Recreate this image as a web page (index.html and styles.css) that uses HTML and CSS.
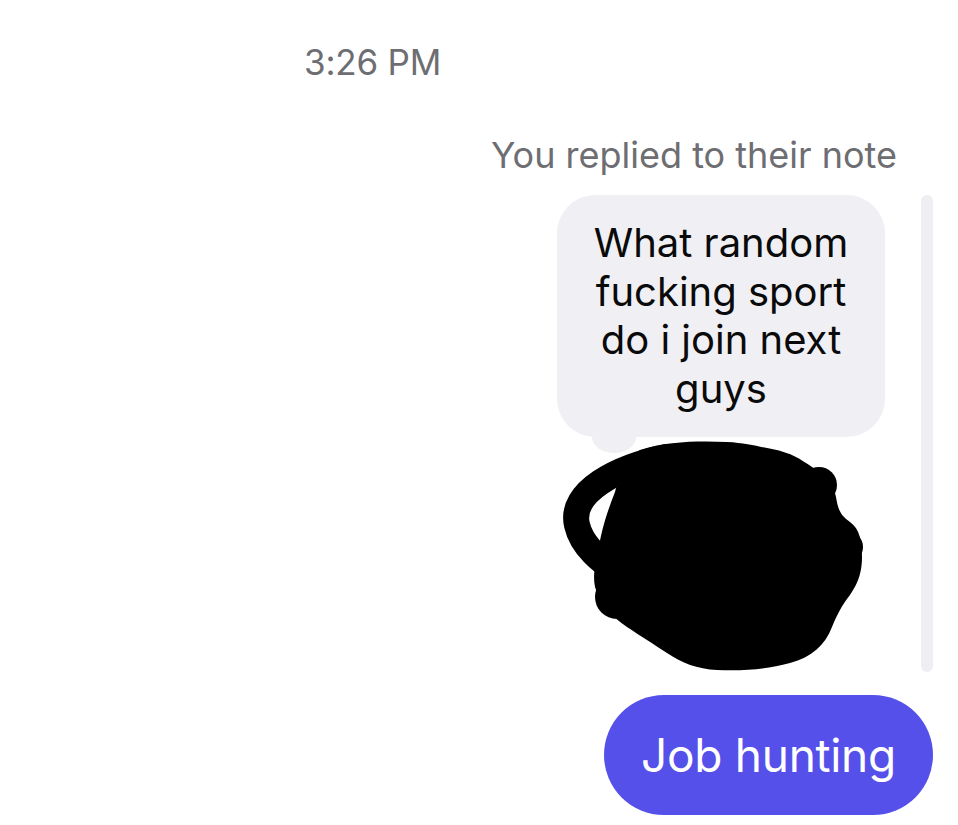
FILE: index.html
```html
<!DOCTYPE html>
<html>
<head>
<meta charset="utf-8">
<link rel="stylesheet" href="styles.css">
</head>
<body>
<div class="thread">
  <div class="time">3:26 PM</div>
  <div class="reply-label">You replied to their note</div>
  <div class="note-row">
    <div class="note-col">
      <div class="note-bubble">
        <p class="note-text">What random fucking sport do i join next guys</p>
        <span class="note-tail"></span>
      </div>
      <svg class="redacted" width="328" height="236" viewBox="0 0 328 236">
        <path fill="#000" d="M83 13 C110 4 143 4 170 5 C190 6 203 10 215 12 C235 16 243 22 255 30 C268 38 276 45 279 60 C281 72 283 78 293 85 C303 92 305 105 305 120 C305 140 298 150 293 158 C285 168 280 178 275 190 C268 208 255 220 233 226 C210 232 190 234 160 233 C140 232 125 226 110 216 C95 206 85 200 70 190 C55 180 42 165 38 150 C35 135 40 125 42 110 C44 95 50 75 58 55 C63 38 70 20 83 13 Z"/>
        <path fill="none" stroke="#000" stroke-width="26" stroke-linecap="round" d="M110 20 C60 30 12 55 20 88 C25 110 45 125 60 135"/>
        <circle cx="290" cy="110" r="16" fill="#000"/>
        <circle cx="262" cy="48" r="18" fill="#000"/>
        <circle cx="60" cy="160" r="22" fill="#000"/>
      </svg>
    </div>
    <div class="quote-bar"></div>
  </div>
  <div class="sent-row">
    <div class="sent-bubble">Job hunting</div>
  </div>
</div>
</body>
</html>
```
FILE: styles.css
```css
html, body {
  margin: 0;
  padding: 0;
  background: #ffffff;
}
body {
  font-family: Inter, "Noto Sans", "Liberation Sans", sans-serif;
  width: 958px;
  height: 825px;
  overflow: hidden;
}
.thread {
  display: flex;
  flex-direction: column;
}
.time {
  margin: 38px 0 0 304px;
  font-size: 35px;
  line-height: 48px;
  color: #6d6d72;
  letter-spacing: -0.2px;
}
.reply-label {
  margin-top: 47px;
  align-self: flex-end;
  margin-right: 61px;
  font-size: 36px;
  line-height: 44px;
  color: #6d6d72;
}
.note-row {
  margin-top: 18px;
  display: flex;
  justify-content: flex-end;
  gap: 36px;
  padding-right: 25px;
}
.note-col {
  display: flex;
  flex-direction: column;
  width: 328px;
}
.note-bubble {
  position: relative;
  background: #f0f0f4;
  border-radius: 38px;
  height: 242px;
  display: flex;
  align-items: center;
  justify-content: center;
}
.note-text {
  margin: 0;
  width: 280px;
  text-align: center;
  font-size: 40px;
  line-height: 48.5px;
  color: #0a0a0a;
}
.note-tail {
  position: absolute;
  left: 35px;
  bottom: -16px;
  width: 44px;
  height: 32px;
  background: #f0f0f4;
  border-radius: 50%;
}
.redacted {
  display: block;
}
.quote-bar {
  width: 12px;
  height: 477px;
  background: #efeff3;
  border-radius: 6px;
}
.sent-row {
  margin-top: 22px;
  display: flex;
  justify-content: flex-end;
  padding-right: 25px;
}
.sent-bubble {
  background: #5550ea;
  color: #ffffff;
  height: 120px;
  width: 329px;
  border-radius: 60px;
  display: flex;
  align-items: center;
  justify-content: center;
  font-size: 46px;
  letter-spacing: -0.3px;
}
```
